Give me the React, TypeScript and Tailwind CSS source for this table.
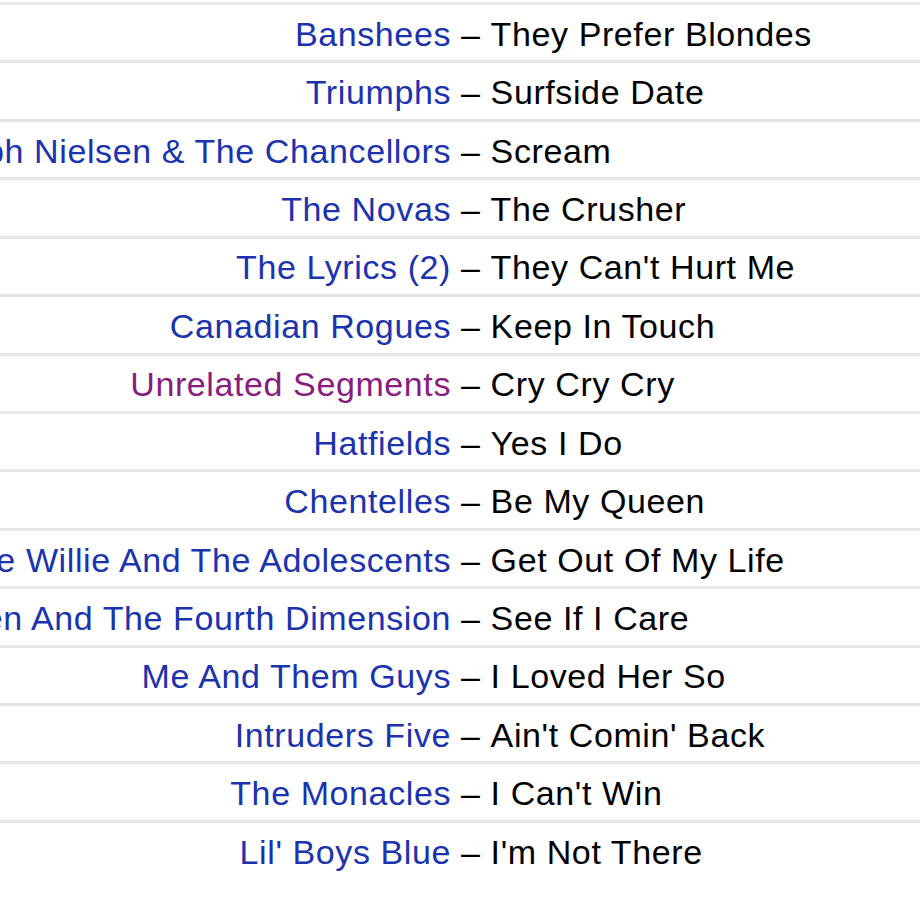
import React from 'react';

const TRACKS = [
  { artist: 'Banshees', title: 'They Prefer Blondes' },
  { artist: 'Triumphs', title: 'Surfside Date' },
  { artist: 'Ralph Nielsen & The Chancellors', title: 'Scream' },
  { artist: 'The Novas', title: 'The Crusher' },
  { artist: 'The Lyrics (2)', title: "They Can't Hurt Me" },
  { artist: 'Canadian Rogues', title: 'Keep In Touch' },
  { artist: 'Unrelated Segments', title: 'Cry Cry Cry', visited: true },
  { artist: 'Hatfields', title: 'Yes I Do' },
  { artist: 'Chentelles', title: 'Be My Queen' },
  { artist: 'Little Willie And The Adolescents', title: 'Get Out Of My Life' },
  { artist: 'Gus Kirchen And The Fourth Dimension', title: 'See If I Care' },
  { artist: 'Me And Them Guys', title: 'I Loved Her So' },
  { artist: 'Intruders Five', title: "Ain't Comin' Back" },
  { artist: 'The Monacles', title: "I Can't Win" },
  { artist: "Lil' Boys Blue", title: "I'm Not There" }
];

export default function App() {
  return (
    <div className="w-[920px] h-[920px] bg-white overflow-hidden pt-[2px] font-['Liberation_Sans',Arial,sans-serif] text-[34px] tracking-[0.6px]">
      {TRACKS.map((t, i) => (
        <div
          key={i}
          className="h-[58.43px] flex items-center border-t-[3px] border-[#e6e6e6] whitespace-nowrap pt-[3px]"
        >
          <div className="w-[451px] shrink-0 flex justify-end overflow-hidden">
            <span className={t.visited ? 'text-[#8a1c80]' : 'text-[#1b33ae]'}>{t.artist}</span>
          </div>
          <span className="text-black">&nbsp;–&nbsp;{t.title}</span>
        </div>
      ))}
    </div>
  );
}
